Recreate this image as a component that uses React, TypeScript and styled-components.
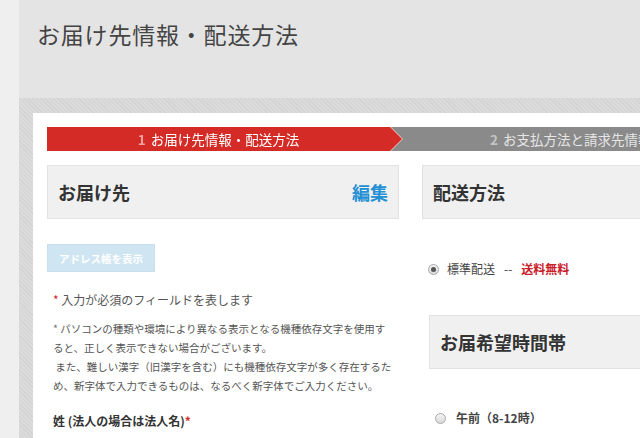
import React from 'react';
import styled, { createGlobalStyle, css } from 'styled-components';

const GlobalStyle = createGlobalStyle`
  html, body {
    margin: 0;
    padding: 0;
    background: #efefef;
  }
  body {
    font-family: "Noto Sans CJK JP", "Noto Sans", sans-serif;
    color: #444;
  }
`;

function Radio({ checked }: { checked?: boolean }) {
  return <RadioMark checked={checked} />;
}

function App() {
  return (
    <>
      <GlobalStyle />
      <Page>
        <SideStrip />
        <Main>
          <Header>
            <Title>お届け先情報・配送方法</Title>
          </Header>
          <Backdrop>
            <Panel>
              <Steps>
                <StepOutline>
                  <StepActive>
                    <StepNumber active>1</StepNumber>お届け先情報・配送方法
                  </StepActive>
                </StepOutline>
                <StepNext>
                  <StepNumber>2</StepNumber>お支払方法と請求先情報
                </StepNext>
              </Steps>
              <Columns>
                <Column>
                  <BoxHeader>
                    <BoxTitle>お届け先</BoxTitle>
                    <EditLink>編集</EditLink>
                  </BoxHeader>
                  <AddressButton type="button">アドレス帳を表示</AddressButton>
                  <Required>
                    <Star>*</Star> 入力が必須のフィールドを表します
                  </Required>
                  <Notes>
                    <Star muted>*</Star> パソコンの種類や環境により異なる表示となる機種依存文字を使用す
                    <br />
                    ると、正しく表示できない場合がございます。
                    <br />
                    &nbsp;また、難しい漢字（旧漢字を含む）にも機種依存文字が多く存在するた
                    <br />
                    め、新字体で入力できるものは、なるべく新字体でご入力ください。
                  </Notes>
                  <FieldLabel>
                    姓 (法人の場合は法人名)<Star>*</Star>
                  </FieldLabel>
                </Column>
                <Column>
                  <BoxHeader>
                    <BoxTitle>配送方法</BoxTitle>
                  </BoxHeader>
                  <ShippingRow>
                    <Radio checked />
                    <span>標準配送</span>
                    <Dash>--</Dash>
                    <FreeShipping>送料無料</FreeShipping>
                  </ShippingRow>
                  <BoxHeader indent>
                    <BoxTitle>お届希望時間帯</BoxTitle>
                  </BoxHeader>
                  <TimeRow>
                    <Radio />
                    <span>午前（8-12時）</span>
                  </TimeRow>
                </Column>
              </Columns>
            </Panel>
          </Backdrop>
        </Main>
      </Page>
    </>
  );
}

const Page = styled.div`
  display: flex;
  width: 640px;
  height: 438px;
  overflow: hidden;
`;

const SideStrip = styled.div`
  flex: none;
  width: 19px;
  background: #efefef;
`;

const Main = styled.div`
  flex: 1;
  min-width: 0;
  display: flex;
  flex-direction: column;
`;

const Header = styled.header`
  flex: none;
  height: 98px;
  box-sizing: border-box;
  padding: 20px 0 0 18px;
  background: #e4e4e4;
`;

const Title = styled.h1`
  margin: 0;
  font-size: 23px;
  line-height: 28px;
  font-weight: 400;
  letter-spacing: 0.8px;
  color: #444;
  white-space: nowrap;
`;

const Backdrop = styled.div`
  flex: 1;
  display: flex;
  padding: 15px 0 0 14px;
  overflow: hidden;
  background: repeating-linear-gradient(
    45deg,
    #d3d3d3 0 1px,
    #dbdbdb 1px 3px
  );
`;

const Panel = styled.div`
  flex: none;
  width: 820px;
  box-sizing: border-box;
  padding: 14px;
  background: #fff;
`;

const Steps = styled.div`
  display: flex;
  height: 24px;
  background: #8a8a8a;
  color: #fff;
  font-size: 13.5px;
  line-height: 24px;
  white-space: nowrap;
`;

const StepOutline = styled.div`
  flex: none;
  filter: drop-shadow(1px 0 0 #f2c9c6);
`;

const StepActive = styled.div`
  width: 355px;
  height: 24px;
  box-sizing: border-box;
  padding-right: 12px;
  display: flex;
  justify-content: center;
  background: #d42b27;
  clip-path: polygon(0 0, calc(100% - 12px) 0, 100% 50%, calc(100% - 12px) 100%, 0 100%);
`;

const StepNext = styled.div`
  flex: 1;
  padding-left: 88px;
  color: #e6e6e6;
`;

const StepNumber = styled.span<{ active?: boolean }>`
  font-weight: 700;
  margin-right: 5px;
  color: ${({ active }) => (active ? '#f5a3a0' : '#c4c4c4')};
`;

const Columns = styled.div`
  display: grid;
  grid-template-columns: 352px 352px;
  column-gap: 23px;
  margin-top: 14px;
`;

const Column = styled.div`
  display: flex;
  flex-direction: column;
  align-items: flex-start;
`;

const BoxHeader = styled.div<{ indent?: boolean }>`
  align-self: stretch;
  display: flex;
  align-items: center;
  justify-content: space-between;
  height: 54px;
  box-sizing: border-box;
  padding: 0 10px;
  background: #f0f0f0;
  border: 1px solid #e2e2e2;
  ${({ indent }) =>
    indent &&
    css`
      margin: 37px 0 0 7px;
    `}
`;

const BoxTitle = styled.h2`
  margin: 0;
  font-size: 18px;
  font-weight: 700;
  color: #333;
`;

const EditLink = styled.a`
  font-size: 18px;
  font-weight: 700;
  color: #2490d4;
  cursor: pointer;
`;

const AddressButton = styled.button`
  margin-top: 25px;
  width: 108px;
  height: 28px;
  padding: 0;
  border: 1px solid #c6dfec;
  background: #cfe6f2;
  color: #fff;
  font-family: inherit;
  font-size: 10.5px;
  font-weight: 700;
`;

const Required = styled.p`
  margin: 19px 0 0;
  padding-left: 6px;
  font-size: 12px;
  line-height: 18px;
  color: #555;
`;

const Star = styled.span<{ muted?: boolean }>`
  color: ${({ muted }) => (muted ? '#777' : '#d42b27')};
`;

const Notes = styled.p`
  margin: 10px 0 0;
  padding-left: 6px;
  font-size: 10.5px;
  line-height: 19px;
  color: #555;
  white-space: nowrap;
`;

const FieldLabel = styled.label`
  margin-top: 17px;
  padding-left: 6px;
  font-size: 12px;
  line-height: 18px;
  font-weight: 700;
  color: #333;
`;

const RadioMark = styled.span<{ checked?: boolean }>`
  position: relative;
  flex: none;
  width: 11px;
  height: 11px;
  box-sizing: border-box;
  border-radius: 50%;
  border: 1px solid #a9a9a9;
  background: linear-gradient(#f4f4f4, #d9d9d9);
  &::after {
    content: '';
    display: ${({ checked }) => (checked ? 'block' : 'none')};
    position: absolute;
    left: 2px;
    top: 2px;
    width: 5px;
    height: 5px;
    border-radius: 50%;
    background: #555;
  }
`;

const ShippingRow = styled.div`
  display: flex;
  align-items: center;
  gap: 8px;
  margin-top: 41px;
  padding-left: 6px;
  font-size: 12px;
  line-height: 18px;
  color: #444;
`;

const Dash = styled.span`
  margin: 0 1px;
`;

const FreeShipping = styled.span`
  color: #c8202a;
  font-weight: 700;
`;

const TimeRow = styled.div`
  display: flex;
  align-items: center;
  gap: 10px;
  margin-top: 40px;
  padding-left: 13px;
  font-size: 12px;
  line-height: 18px;
  font-weight: 700;
  color: #444;
`;

export default App;
